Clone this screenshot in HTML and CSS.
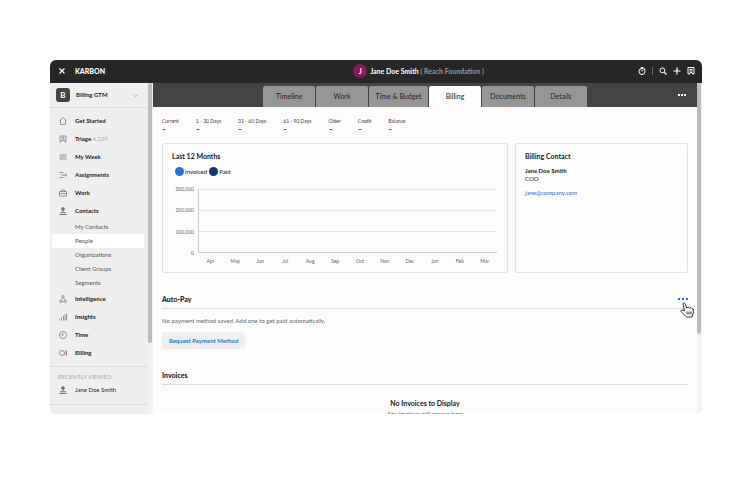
FILE: index.html
```html
<!DOCTYPE html>
<html lang="en">
<head>
    <meta charset="UTF-8">
    <meta name="viewport" content="width=device-width, initial-scale=1">
    <title>Jane Doe Smith - Billing</title>
    <link rel="stylesheet" href="styles.css">
</head>
<body>
    <div class="app">
        <header class="topbar">
            <div class="topbar-left">
                <button class="icon-btn" type="button" aria-label="Close menu">
                    <svg class="icon" viewBox="0 0 16 16"><path d="M3 3l10 10M13 3L3 13" stroke-width="2.4"/></svg>
                </button>
                <span class="logo">KARBON</span>
            </div>
            <div class="topbar-title">
                <span class="avatar">J</span>
                <span><b>Jane Doe Smith</b> <span class="org">( Reach Foundation )</span></span>
            </div>
            <div class="topbar-right">
                <button class="icon-btn" type="button" aria-label="Timer">
                    <svg class="icon" viewBox="0 0 16 16"><circle cx="8" cy="9" r="6"/><path d="M8 5.500V9M5.500 1h5M13 2.500l2 2"/></svg>
                </button>
                <span class="separator"></span>
                <button class="icon-btn" type="button" aria-label="Search">
                    <svg class="icon" viewBox="0 0 16 16"><circle cx="6.800" cy="6.800" r="4.800"/><path d="M10.200 10.200L15 15" stroke-width="2.6"/></svg>
                </button>
                <button class="icon-btn" type="button" aria-label="Add">
                    <svg class="icon" viewBox="0 0 16 16"><path d="M8 1v14M1 8h14" stroke-width="2.4"/></svg>
                </button>
                <button class="icon-btn" type="button" aria-label="Triage">
                    <svg class="icon" viewBox="0 0 16 16"><path d="M2 14V1h12v13h-3l-1-3H6l-1 3zM5 5h6M5 8h6"/></svg>
                </button>
            </div>
        </header>

        <div class="layout">
            <!-- Sidebar -->
            <aside class="sidebar">
                <div class="sidebar-inner">
                    <button class="workspace" type="button">
                        <span class="workspace-badge">B</span>
                        <span class="workspace-name">Billing GTM</span>
                        <svg class="chevron" viewBox="0 0 10 10"><path d="M1 3l4 4 4-4"/></svg>
                    </button>

                    <nav class="nav">
                        <a class="nav-item" href="#">
                            <svg class="icon" viewBox="0 0 16 16"><path d="M1 7.500L8 1l7 6.500M3 6v9h10V6"/></svg>Get Started
                        </a>
                        <a class="nav-item" href="#">
                            <svg class="icon" viewBox="0 0 16 16"><path d="M2 14V2h12v12h-2l-1-3H5l-1 3zM5 5h6M5 8h6"/></svg><span>Triage <span class="count">4,239</span></span>
                        </a>
                        <a class="nav-item" href="#">
                            <svg class="icon" viewBox="0 0 16 16"><path d="M1 4h14M1 8h14M1 12h14"/></svg>My Week
                        </a>
                        <a class="nav-item" href="#">
                            <svg class="icon" viewBox="0 0 16 16"><path d="M1 3h8M4 8h11M1 13h8M12 5l3 3-3 3"/></svg>Assignments
                        </a>
                        <a class="nav-item" href="#">
                            <svg class="icon" viewBox="0 0 16 16"><path d="M1 5h14v9H1zM1 9h14M5 5V2h6v3"/></svg>Work
                        </a>
                        <a class="nav-item" href="#">
                            <svg class="icon" viewBox="0 0 16 16"><circle cx="8" cy="4" r="3" fill="currentColor"/><path d="M8 6v5M2 11.500h12M1 15h14" stroke-width="2"/></svg>Contacts
                        </a>
                        <div class="subnav">
                            <a class="subnav-item" href="#">My Contacts</a>
                            <a class="subnav-item active" href="#">People</a>
                            <a class="subnav-item" href="#">Organizations</a>
                            <a class="subnav-item" href="#">Client Groups</a>
                            <a class="subnav-item" href="#">Segments</a>
                        </div>
                        <a class="nav-item" href="#">
                            <svg class="icon" viewBox="0 0 16 16"><circle cx="8" cy="3" r="2"/><circle cx="3" cy="13" r="2"/><circle cx="13" cy="13" r="2"/><path d="M7 5l-3.500 6M9 5l3.500 6M5 13h6"/></svg>Intelligence
                        </a>
                        <a class="nav-item" href="#">
                            <svg class="icon" viewBox="0 0 16 16"><path d="M1 15v-3M5 15V9M9 15V5M12 15V3M15 15V1"/></svg>Insights
                        </a>
                        <a class="nav-item" href="#">
                            <svg class="icon" viewBox="0 0 16 16"><circle cx="8" cy="8" r="7"/><path d="M8 4v4.500H5"/></svg>Time
                        </a>
                        <a class="nav-item" href="#">
                            <svg class="icon" viewBox="0 0 16 16"><circle cx="6" cy="8" r="5"/><path d="M12 3c3 3 3 7 0 10M15 3v10"/></svg>Billing
                        </a>
                    </nav>

                    <div class="recent">
                        <div class="recent-title">RECENTLY VIEWED</div>
                        <a class="nav-item recent-item" href="#">
                            <svg class="icon" viewBox="0 0 16 16"><circle cx="8" cy="4" r="3" fill="currentColor"/><path d="M8 6v5M2 11.500h12M1 15h14" stroke-width="2"/></svg>Jane Doe Smith
                        </a>
                    </div>
                </div>
                <div class="scroll"><div class="scroll-thumb"></div></div>
            </aside>

            <!-- Main content -->
            <main class="main">
                <div class="content">
                    <div class="tabbar">
                        <nav class="tabs">
                            <a class="tab" href="#">Timeline</a>
                            <a class="tab" href="#">Work</a>
                            <a class="tab tab-wide" href="#">Time &amp; Budget</a>
                            <a class="tab active" href="#">Billing</a>
                            <a class="tab" href="#">Documents</a>
                            <a class="tab" href="#">Details</a>
                        </nav>
                        <button class="dots" type="button" aria-label="More options"><i></i><i></i><i></i></button>
                    </div>

                    <div class="page">
                        <dl class="aging">
                            <div><dt>Current</dt><dd>–</dd></div>
                            <div><dt>1 - 30 Days</dt><dd>–</dd></div>
                            <div><dt>31 - 60 Days</dt><dd>–</dd></div>
                            <div><dt>61 - 90 Days</dt><dd>–</dd></div>
                            <div><dt>Older</dt><dd>–</dd></div>
                            <div><dt>Credit</dt><dd>–</dd></div>
                            <div><dt>Balance</dt><dd>–</dd></div>
                        </dl>

                        <div class="cards">
                            <section class="card">
                                <h2>Last 12 Months</h2>
                                <div class="legend">
                                    <span class="legend-dot invoiced"></span>Invoiced
                                    <span class="legend-dot paid"></span>Paid
                                </div>
                                <div class="chart">
                                    <div class="y-axis"><span>300,000</span><span>200,000</span><span>100,000</span><span>0</span></div>
                                    <div class="plot"><div></div><div></div><div></div></div>
                                    <div class="x-axis">
                                        <span>Apr</span><span>May</span><span>Jun</span><span>Jul</span><span>Aug</span><span>Sep</span><span>Oct</span><span>Nov</span><span>Dec</span><span>Jan</span><span>Feb</span><span>Mar</span>
                                    </div>
                                </div>
                            </section>
                            <section class="card contact">
                                <h2>Billing Contact</h2>
                                <b>Jane Doe Smith</b>
                                <span>COO</span>
                                <a href="mailto:jane@company.com">jane@company.com</a>
                            </section>
                        </div>

                        <section class="autopay">
                            <div class="section-head">
                                <h3>Auto-Pay</h3>
                                <button class="dots" type="button" aria-label="Auto-Pay options"><i></i><i></i><i></i></button>
                                <svg class="pointer" viewBox="0 0 14 16"><path d="M3 1.500C4 .5 5 1 5.500 2.500L6.500 6 8 5l1.500 1L11 5.500l1 1.200 1.300.3V11L12 15H6.500L1 9.500 1.500 8l1.500.2L4.500 9z"/><path d="M7 9.500v3M9 9.500v3M11 9.500v3"/></svg>
                            </div>
                            <p>No payment method saved. Add one to get paid automatically.</p>
                            <button class="btn" type="button">Request Payment Method</button>
                        </section>

                        <section class="invoices">
                            <div class="section-head"><h3>Invoices</h3></div>
                            <div class="empty">
                                <b>No Invoices to Display</b>
                                <span>Any invoices will appear here</span>
                            </div>
                        </section>
                    </div>
                </div>
                <div class="scroll"><div class="scroll-thumb main-thumb"></div></div>
            </main>
        </div>
    </div>
</body>
</html>
```
FILE: styles.css
```css
* { box-sizing: border-box; }
body { display: flex; height: 100vh; margin: 0; padding: 60px 50px 87px; background: #fff; color: #222; font: 6px/8px Lato, "Open Sans", sans-serif; }
button { padding: 0; border: 0; background: none; color: inherit; font: inherit; cursor: pointer; }
a { color: inherit; text-decoration: none; }
h2, h3, p, dl, dd { margin: 0; }
svg { display: block; fill: none; stroke: currentColor; }

.app { display: flex; flex: 1; flex-direction: column; min-width: 0; overflow: hidden; border-radius: 6px; background: #fcfcfc; }
.icon { width: 8px; height: 8px; flex: none; stroke-width: 1.5; }

/* Top bar */
.topbar { display: grid; flex: none; grid-template-columns: 1fr auto 1fr; align-items: center; height: 23px; padding: 0 7px 1px 8px; background: #272727; color: #fff; }
.topbar-left, .topbar-title, .topbar-right { display: flex; align-items: center; }
.topbar-left { gap: 9px; }
.logo { font-size: 7px; font-weight: 900; }
.topbar-title { gap: 3px; padding-left: 84px; font-size: 7px; }
.avatar { width: 14px; height: 14px; border-radius: 50%; background: #8b1a5c; font-weight: 700; line-height: 14px; text-align: center; }
.org { color: #999; font-weight: 700; }
.topbar-right { justify-content: flex-end; gap: 6px; }
.topbar-right .icon { stroke-width: 2; }
.separator { width: 1px; height: 8px; background: #666; }

.layout { display: flex; flex: 1; min-height: 0; }
.scroll { flex: none; width: 5px; background: #f3f3f3; }
.scroll-thumb { width: 4px; height: 260px; border-radius: 2px; background: #bbb; }
.main-thumb { height: 251px; }

/* Sidebar */
.sidebar { display: flex; flex: none; width: 103px; overflow: hidden; background: #efefef; }
.sidebar-inner { flex: 1; }
.workspace { display: flex; align-items: center; width: 100%; height: 25px; padding: 0 10px 0 6px; border-bottom: 1px solid #ddd; font-weight: 700; }
.workspace-badge { width: 14px; height: 14px; margin-right: 6px; border-radius: 3px; background: #444; color: #fff; font-size: 8px; line-height: 14px; }
.workspace-name { flex: 1; text-align: left; }
.chevron { width: 5px; height: 5px; color: #777; }
.nav { padding: 4px 0; }
.nav-item { display: flex; align-items: center; gap: 8px; height: 18px; padding-left: 9px; font-weight: 700; }
.nav-item .icon { color: #777; }
.count { color: #aaa; font-weight: 400; }
.subnav { padding: 0 4px 0 2px; }
.subnav-item { display: block; height: 14px; padding-left: 23px; color: #555; line-height: 14px; }
.subnav-item.active { border-radius: 1px; background: #fff; }
.recent { padding: 6px 0 5px; border-top: 1px solid #ddd; border-bottom: 1px solid #ddd; }
.recent-title { padding-left: 8px; color: #aaa; }
.recent-item { font-weight: 400; }

/* Tabs */
.main { display: flex; flex: 1; min-width: 0; overflow: hidden; }
.content { flex: 1; min-width: 0; }
.tabbar { display: grid; grid-template-columns: 1fr auto 1fr; align-items: end; height: 24px; background: #434343; }
.tabs { display: flex; grid-column: 2; gap: 1px; }
.tab { width: 52px; height: 21px; border-radius: 2px 2px 0 0; background: #969696; font-size: 7px; line-height: 21px; text-align: center; }
.tab-wide { width: 59px; }
.tab.active { background: #fcfcfc; }
.dots { display: flex; gap: 2px; }
.dots i { width: 2px; height: 2px; background: currentColor; }
.tabbar .dots { align-self: center; justify-self: end; margin-right: 11px; color: #fff; gap: 1px; }

/* Billing page */
.page { padding: 10px 9px 0; }
.aging { display: flex; gap: 17px; font-size: 5px; }
.aging dt { color: #444; }
.aging dd { font-size: 7px; font-weight: 700; }
.cards { display: grid; grid-template-columns: 2fr 1fr; gap: 7px; margin-top: 10px; }
.card { min-height: 130px; padding: 7px 10px 7px 9px; border: 1px solid #e2e2e2; border-radius: 2px; }
h2 { font-size: 7px; line-height: 10px; }
.legend { display: flex; align-items: center; gap: 1px; margin: 6px 0 13px 3px; }
.legend-dot { width: 9px; height: 9px; border-radius: 50%; }
.invoiced { background: #2670d4; }
.paid { margin-left: 1px; background: #12356b; }
.chart { display: grid; grid-template-columns: 22px 1fr; column-gap: 4px; color: #666; font-size: 5px; }
.y-axis { display: flex; flex-direction: column; justify-content: space-between; height: 72px; margin: -4px 0; text-align: right; }
.plot { display: grid; grid-template-rows: repeat(3, 1fr); height: 64px; border-bottom: 1px solid #ccc; border-left: 1px solid #ccc; }
.plot div { border-top: 1px solid #e5e5e5; }
.x-axis { display: flex; grid-column: 2; margin-top: 4px; }
.x-axis span { flex: 1; text-align: center; }
.contact { display: flex; flex-direction: column; align-items: flex-start; }
.contact b { margin-top: 6px; }
.contact a { margin-top: 6px; color: #2670d4; }
.section-head { display: flex; position: relative; align-items: center; justify-content: space-between; height: 16px; padding-bottom: 3px; border-bottom: 1px solid #ddd; }
h3 { font-size: 7px; font-weight: 900; line-height: 10px; }
.autopay { margin-top: 20px; }
.autopay .dots { color: #2670d4; }
.pointer { position: absolute; top: 9px; right: -6px; width: 14px; height: 16px; fill: #fff; stroke: #333; }
.autopay p { margin: 8px 0 7px; color: #666; }
.btn { height: 17px; padding: 0 7px; border-radius: 2px; background: #efefef; color: #2670d4; font-weight: 700; }
.invoices { margin-top: 20px; }
.empty { display: flex; flex-direction: column; align-items: center; padding-top: 13px; font-size: 7px; line-height: 10px; }
.empty span { margin-top: 2px; color: #555; font-size: 6px; line-height: 8px; }
```
